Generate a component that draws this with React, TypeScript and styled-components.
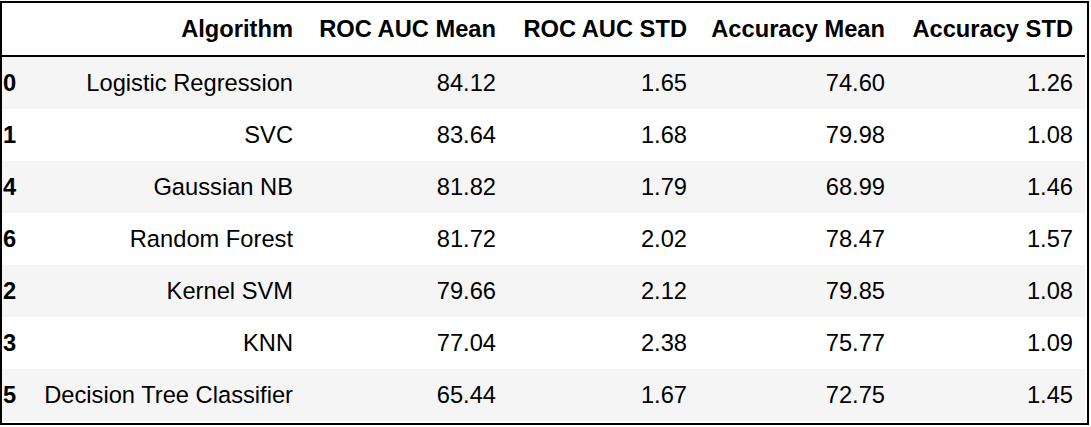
import React from 'react'
import styled, { createGlobalStyle } from 'styled-components'

const GlobalStyle = createGlobalStyle`
    html, body {
        margin: 0;
        padding: 0;
        background: #ffffff;
    }
    body {
        font-family: 'Liberation Sans', Arial, sans-serif;
        color: #000000;
    }
`

const Frame = styled.div`
    width: 1089px;
    height: 424px;
    margin-top: 1px;
    box-sizing: border-box;
    border: 2px solid #000000;
    overflow: hidden;
`
const Table = styled.table`
    table-layout: fixed;
    width: 1083px;
    border-collapse: collapse;
    border-spacing: 0;
    font-size: 23.7px;
    line-height: normal;
`
const Col = styled.col<{ $width: number }>`
    width: ${(p) => p.$width}px;
`
const HeadRow = styled.tr`
    border-bottom: 2px solid #000000;
`
const BodyRow = styled.tr`
    &:nth-child(odd) {
        background: #f5f5f5;
    }
`
const HeadCell = styled.th<{ $index?: boolean }>`
    height: 52px;
    padding: 0 12px 0 ${(p) => (p.$index ? '1px' : '12px')};
    text-align: ${(p) => (p.$index ? 'left' : 'right')};
    vertical-align: middle;
    font-weight: bold;
    white-space: nowrap;
    overflow: hidden;
`
const Cell = styled.td`
    height: 52px;
    padding: 0 12px;
    text-align: right;
    vertical-align: middle;
    white-space: nowrap;
`

const widths = [29, 274, 203, 191, 198, 188]

const columns = ['Algorithm', 'ROC AUC Mean', 'ROC AUC STD', 'Accuracy Mean', 'Accuracy STD']

const rows = [
    { index: '0', name: 'Logistic Regression', values: ['84.12', '1.65', '74.60', '1.26'] },
    { index: '1', name: 'SVC', values: ['83.64', '1.68', '79.98', '1.08'] },
    { index: '4', name: 'Gaussian NB', values: ['81.82', '1.79', '68.99', '1.46'] },
    { index: '6', name: 'Random Forest', values: ['81.72', '2.02', '78.47', '1.57'] },
    { index: '2', name: 'Kernel SVM', values: ['79.66', '2.12', '79.85', '1.08'] },
    { index: '3', name: 'KNN', values: ['77.04', '2.38', '75.77', '1.09'] },
    { index: '5', name: 'Decision Tree Classifier', values: ['65.44', '1.67', '72.75', '1.45'] },
]

const App = () => {
    return (
        <>
            <GlobalStyle />
            <Frame>
                <Table>
                    <colgroup>
                        {widths.map((w, i) => (
                            <Col key={i} $width={w} />
                        ))}
                    </colgroup>
                    <thead>
                        <HeadRow>
                            <HeadCell $index />
                            {columns.map((col) => (
                                <HeadCell key={col}>{col}</HeadCell>
                            ))}
                        </HeadRow>
                    </thead>
                    <tbody>
                        {rows.map((row) => (
                            <BodyRow key={row.index}>
                                <HeadCell $index>{row.index}</HeadCell>
                                <Cell>{row.name}</Cell>
                                {row.values.map((v, i) => (
                                    <Cell key={i}>{v}</Cell>
                                ))}
                            </BodyRow>
                        ))}
                    </tbody>
                </Table>
            </Frame>
        </>
    )
}

export default App
